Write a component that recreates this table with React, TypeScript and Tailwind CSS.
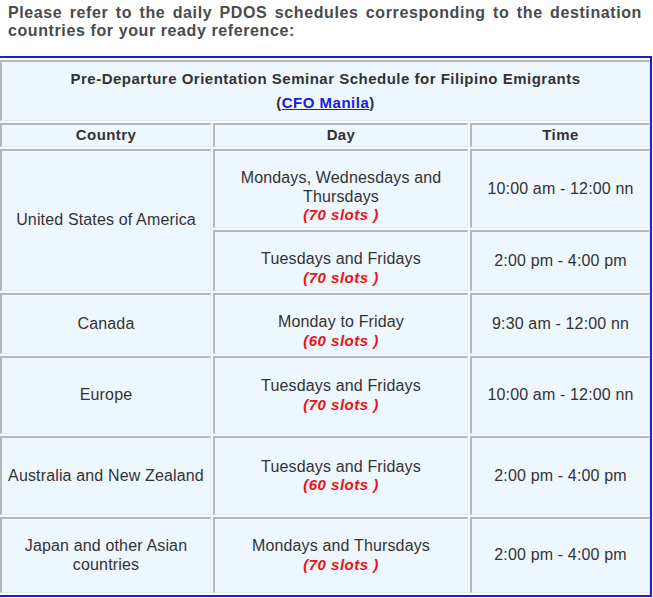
import React from "react";

const cell =
  "bg-[#eef6fe] border-t-2 border-l-2 border-b border-r border-t-[#b5b8bb] border-l-[#b5b8bb] border-b-[#e6eaee] border-r-[#e6eaee] text-center align-middle px-1";

function Slots({ n }: { n: string }) {
  return (
    <div className="text-[15px] text-[#ee1111] font-bold italic tracking-[0.5px]">
      ({n} slots )
    </div>
  );
}

export default function App() {
  return (
    <div
      className="w-[653px] h-[598px] bg-white overflow-hidden text-[#333]"
      style={{ fontFamily: '"Liberation Sans", Arial, sans-serif' }}
    >
      <div className="pl-[8px] pr-[11px] pt-[4px] text-[16px] leading-[18px] font-bold text-[#4a4a4a] tracking-[0.6px]">
        <div className="text-justify [text-align-last:justify] whitespace-nowrap">
          Please refer to the daily PDOS schedules corresponding to the destination
        </div>
        <div>countries for your ready reference:</div>
      </div>
      <div className="mt-[16px] w-[652px] border-t-2 border-r-2 border-b-2 border-[#1d1dd6] bg-[#f7fafd]">
        <table className="w-[650px] border-separate border-spacing-x-[2px] border-spacing-y-[2px] text-[16px] leading-[18.5px] tracking-[0.15px] table-fixed -ml-[2px]">
          <colgroup>
            <col className="w-[211px]" />
            <col className="w-[255px]" />
            <col className="w-[180px]" />
          </colgroup>
          <tbody>
            <tr className="h-[61px]">
              <td colSpan={3} className={cell + " text-[15px] font-bold leading-[24px] tracking-[0.5px]"}>
                <div>Pre-Departure Orientation Seminar Schedule for Filipino Emigrants</div>
                <div>
                  (<a href="#" className="text-[#1a1ae0] underline">CFO Manila</a>)
                </div>
              </td>
            </tr>
            <tr className="h-[24px]">
              <td className={cell + " text-[15px] font-bold tracking-[0.4px]"}>Country</td>
              <td className={cell + " text-[15px] font-bold tracking-[0.4px]"}>Day</td>
              <td className={cell + " text-[15px] font-bold tracking-[0.4px]"}>Time</td>
            </tr>
            <tr className="h-[79px]">
              <td rowSpan={2} className={cell}>United States of America</td>
              <td className={cell + " pt-[16px]"}>
                <div>Mondays, Wednesdays and</div>
                <div>Thursdays</div>
                <Slots n="70" />
              </td>
              <td className={cell}>10:00 am - 12:00 nn</td>
            </tr>
            <tr className="h-[61px]">
              <td className={cell + " pt-[15px]"}>
                <div>Tuesdays and Fridays</div>
                <Slots n="70" />
              </td>
              <td className={cell}>2:00 pm - 4:00 pm</td>
            </tr>
            <tr className="h-[61px]">
              <td className={cell}>Canada</td>
              <td className={cell + " pt-[15px]"}>
                <div>Monday to Friday</div>
                <Slots n="60" />
              </td>
              <td className={cell}>9:30 am - 12:00 nn</td>
            </tr>
            <tr className="h-[78px]">
              <td className={cell}>Europe</td>
              <td className={cell}>
                <div>Tuesdays and Fridays</div>
                <Slots n="70" />
              </td>
              <td className={cell}>10:00 am - 12:00 nn</td>
            </tr>
            <tr className="h-[79px]">
              <td className={cell}>Australia and New Zealand</td>
              <td className={cell}>
                <div>Tuesdays and Fridays</div>
                <Slots n="60" />
              </td>
              <td className={cell}>2:00 pm - 4:00 pm</td>
            </tr>
            <tr className="h-[76px]">
              <td className={cell}>
                <div>Japan and other Asian</div>
                <div>countries</div>
              </td>
              <td className={cell}>
                <div>Mondays and Thursdays</div>
                <Slots n="70" />
              </td>
              <td className={cell}>2:00 pm - 4:00 pm</td>
            </tr>
          </tbody>
        </table>
      </div>
    </div>
  );
}
